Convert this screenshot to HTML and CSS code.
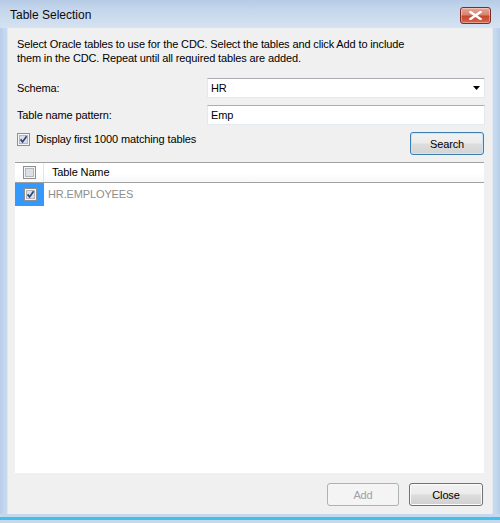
FILE: index.html
```html
<!DOCTYPE html>
<html>
<head>
<meta charset="utf-8">
<title>Table Selection</title>
<link rel="stylesheet" href="styles.css">
</head>
<body>
<div class="window">
  <div class="titlebar">
    <span class="title">Table Selection</span>
    <span class="close-x">
      <svg width="13" height="9" viewBox="0 0 13 9"><path d="M1.5 1 L11.5 8 M11.5 1 L1.5 8" stroke="#fff" stroke-width="2.4" stroke-linecap="square"/></svg>
    </span>
  </div>
  <div class="client">
    <p class="intro">Select Oracle tables to use for the CDC. Select the tables and click Add to include<br>them in the CDC. Repeat until all required tables are added.</p>
    <div class="form">
      <label class="lbl">Schema:</label>
      <div class="field combo"><span>HR</span><svg class="arrow" width="7" height="4" viewBox="0 0 7 4"><path d="M0 0 H7 L3.5 4 Z" fill="#000"/></svg></div>
      <label class="lbl">Table name pattern:</label>
      <div class="field textbox">Emp</div>
    </div>
    <div class="options">
      <label class="check">
        <span class="cb"><svg width="13" height="13" viewBox="0 0 13 13"><rect x="0.5" y="0.5" width="12" height="12" fill="#f6f6f6" stroke="#8e8f8f"/><rect x="2.5" y="2.5" width="8" height="8" fill="#dcdfe3" stroke="#b3b7bc"/><path d="M3.6 6.4 L5.6 8.9 L9.6 3.2" stroke="#2c4380" stroke-width="1.7" fill="none"/></svg></span>
        <span>Display first 1000 matching tables</span>
      </label>
      <button class="btn btn-default">Search</button>
    </div>
    <div class="listview">
      <div class="lv-header">
        <div class="lv-cbcol"><svg width="13" height="13" viewBox="0 0 13 13"><rect x="0.5" y="0.5" width="12" height="12" fill="#f6f6f6" stroke="#8e8f8f"/><rect x="2.5" y="2.5" width="8" height="8" fill="#dcdfe3" stroke="#b3b7bc"/></svg></div>
        <div class="lv-col">Table Name</div>
      </div>
      <div class="lv-row">
        <div class="lv-cbcol selected"><svg width="13" height="13" viewBox="0 0 13 13"><rect x="0.5" y="0.5" width="12" height="12" fill="#f6f6f6" stroke="#8e8f8f"/><rect x="2.5" y="2.5" width="8" height="8" fill="#dcdfe3" stroke="#b3b7bc"/><path d="M3.6 6.4 L5.6 8.9 L9.6 3.2" stroke="#2c4380" stroke-width="1.7" fill="none"/></svg></div>
        <div class="lv-cell">HR.EMPLOYEES</div>
      </div>
    </div>
    <div class="footer">
      <button class="btn btn-disabled" disabled>Add</button>
      <button class="btn btn-normal">Close</button>
    </div>
  </div>
  <div class="bottom-frame"><span class="glow"></span></div>
</div>
</body>
</html>
```

FILE: styles.css
```css
* { box-sizing: border-box; }
html, body {
  margin: 0;
  padding: 0;
  width: 500px;
  height: 523px;
  overflow: hidden;
}
body {
  font-family: "Liberation Sans", Arial, sans-serif;
  font-size: 11px;
  letter-spacing: -0.13px;
  color: #000;
}
.window {
  width: 500px;
  height: 523px;
  display: flex;
  flex-direction: column;
  background: linear-gradient(to right, #b7cde8 0, #c6d9ee 5px, #dbe6f3 50%, #c6d9ee 495px, #b7cde8 100%);
}
.titlebar {
  height: 28px;
  display: flex;
  align-items: flex-start;
  justify-content: space-between;
  padding: 7px 9px 0 10px;
  background: linear-gradient(to bottom, #b6cbe5 0, #c5d7ec 10px, #d5e2f1 28px);
}
.title {
  font-size: 12px;
  letter-spacing: 0;
  line-height: 17px;
  color: #0c0c0c;
  font-family: "Liberation Sans", Arial, sans-serif;
}
.close-x {
  width: 31px;
  height: 17px;
  border: 1px solid #7b2d26;
  border-radius: 3px;
  background: linear-gradient(to bottom, #e8a694 0, #d98272 45%, #c4462f 55%, #d66a4f 100%);
  display: flex;
  align-items: center;
  justify-content: center;
  box-shadow: inset 0 0 0 1px rgba(255,255,255,0.35);
}
.client {
  flex: 1;
  margin: 0 7px 0 7px;
  background: #f0f0f0;
  border: 1px solid #dfe7f1;
  border-width: 0 1px;
  display: flex;
  flex-direction: column;
  padding: 9px 7px 8px 9px;
}
.intro {
  margin: 0;
  line-height: 14px;
}
.form {
  margin-top: 13px;
  display: grid;
  grid-template-columns: 190px 1fr;
  row-gap: 7px;
  align-items: center;
}
.lbl { line-height: 20px; }
.field {
  height: 20px;
  background: #fff;
  border: 1px solid #e3e9ef;
  border-top-color: #abadb3;
  display: flex;
  align-items: center;
  padding: 0 3px;
  line-height: 18px;
}
.combo { justify-content: space-between; padding-right: 4px; }
.options {
  margin-top: 7px;
  display: flex;
  justify-content: space-between;
  align-items: flex-start;
}
.check {
  display: flex;
  align-items: center;
  gap: 6px;
  margin-top: 1px;
  line-height: 13px;
}
.cb { display: flex; }
.btn {
  font-family: "Liberation Sans", Arial, sans-serif;
  font-size: 11px;
  letter-spacing: -0.13px;
  height: 23px;
  width: 74px;
  border-radius: 3px;
  padding: 0;
  color: #000;
}
.btn-default {
  margin-right: 1px;
  border: 1px solid #3c7fb1;
  background: linear-gradient(to bottom, #f2f2f2 0, #ebebeb 48%, #dddddd 52%, #d4d4d4 100%);
  box-shadow: inset 0 0 0 1px #c9e6f7;
}
.btn-normal {
  border: 1px solid #707070;
  background: linear-gradient(to bottom, #f2f2f2 0, #ebebeb 48%, #dddddd 52%, #cfcfcf 100%);
  box-shadow: inset 0 0 0 1px #fcfcfc;
}
.btn-disabled {
  border: 1px solid #adb2b5;
  background: #f4f4f4;
  color: #a0a0a0;
  width: 72px;
}
.listview {
  flex: 1;
  margin: 7px 1px 0 -2px;
  background: #fff;
  border-top: 1px solid #a0a0a0;
  display: flex;
  flex-direction: column;
}
.lv-header {
  display: flex;
  height: 20px;
  border-bottom: 1px solid #a0a0a0;
  background: linear-gradient(to bottom, #ffffff 0, #ffffff 50%, #f7f8fa 100%);
}
.lv-cbcol {
  width: 29px;
  display: flex;
  align-items: center;
  justify-content: center;
  padding-left: 1px;
}
.lv-header .lv-cbcol { border-right: 1px solid #e5e5e5; }
.lv-col {
  padding-left: 8px;
  line-height: 19px;
}
.lv-row {
  display: flex;
  height: 23px;
}
.lv-cbcol.selected { background: #3399ff; }
.lv-cell {
  padding-left: 4px;
  line-height: 23px;
  color: #8d8d8d;
}
.footer {
  margin-top: 10px;
  display: flex;
  justify-content: flex-end;
  gap: 10px;
  padding-right: 2px;
}
.bottom-frame {
  height: 9px;
  padding-top: 3px;
  background: #c5d9ee;
}
.glow {
  display: block;
  height: 3px;
  background: #3fc1ec;
}
```
